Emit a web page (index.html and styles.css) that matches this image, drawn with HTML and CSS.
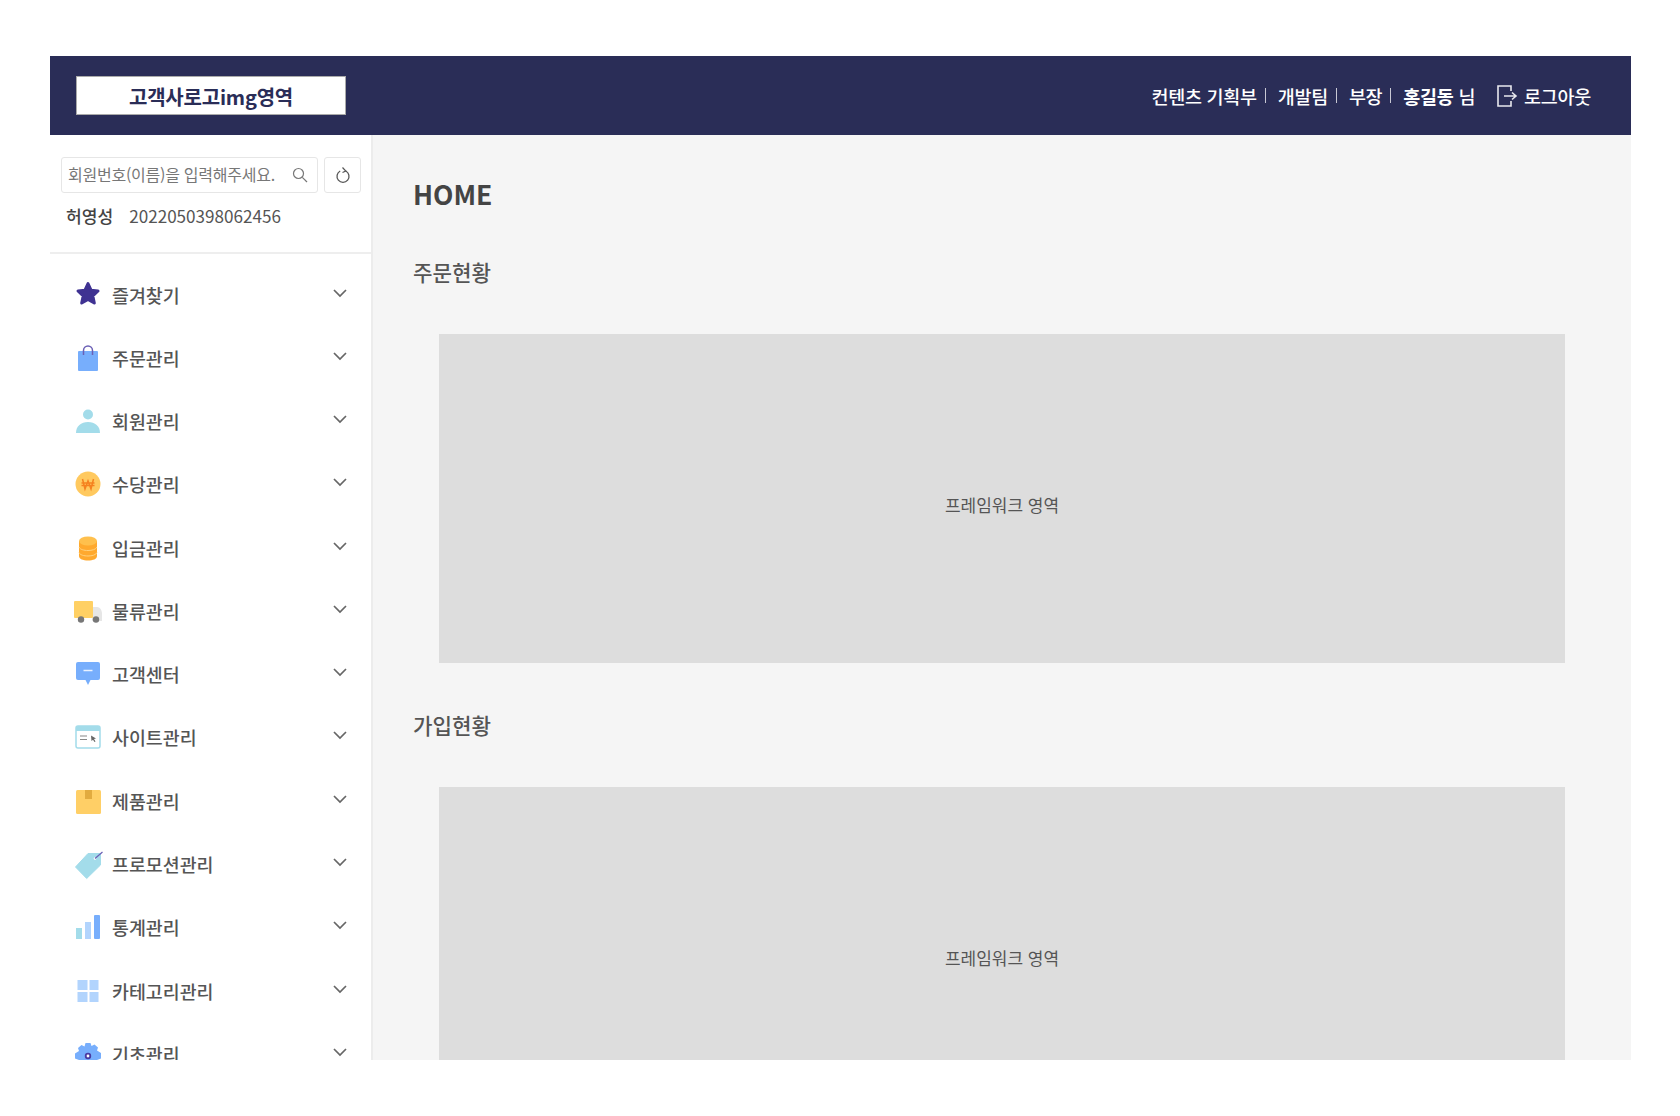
FILE: index.html
```html
<!DOCTYPE html>
<html lang="ko">
<head>
<meta charset="utf-8">
<title>HOME</title>
<link rel="stylesheet" href="styles.css">
</head>
<body>
<div class="app">
  <header class="topbar">
    <div class="logo">고객사로고img영역</div>
    <div class="user">
      <span>컨텐츠 기획부</span><i class="sep"></i>
      <span>개발팀</span><i class="sep"></i>
      <span>부장</span><i class="sep"></i>
      <span><b>홍길동</b> 님</span>
      <a class="logout">
        <svg width="22" height="24" viewBox="0 0 22 24" fill="none" stroke="#e8e8ee" stroke-width="1.6"><path d="M15 7V2H2v20h13v-5"/><path d="M8 12h12M16 8.500l4 3.500-4 3.500"/></svg>
        로그아웃
      </a>
    </div>
  </header>
  <div class="body">
    <aside class="side">
      <div class="member">
        <div class="search-row">
          <div class="search">
            <span class="ph">회원번호(이름)을 입력해주세요.</span>
            <svg width="16" height="16" viewBox="0 0 16 16" fill="none" stroke="#777" stroke-width="1.200"><circle cx="6.500" cy="6.500" r="5"/><path d="M10.300 10.300l4.700 4.700"/></svg>
          </div>
          <div class="refresh">
            <svg width="16" height="18" viewBox="0 0 16 18" fill="none" stroke="#555" stroke-width="1.300"><path d="M5.200 5a6 6 0 1 0 5.600 0"/><path d="M7.500 1.500l3.300 3.500-3.300 1.500" stroke-width="1.200"/></svg>
          </div>
        </div>
        <div class="who"><b>허영성</b><span>2022050398062456</span></div>
      </div>
      <ul class="menu">
        <li><svg viewBox="0 0 26 26"><path fill="#3f3292" stroke="#3f3292" stroke-width="3" stroke-linejoin="round" d="M13 1.500l3 6.700 7 .8-5.200 4.800 1.500 7.200L13 17.500l-6.300 3.500 1.500-7.200L3 9l7-.8z"/></svg><span>즐겨찾기</span><svg class="chev" viewBox="0 0 14 9"><path d="M1 1l6 6 6-6"/></svg></li>
        <li><svg viewBox="0 0 26 26"><rect x="3" y="6" width="20" height="20" rx="1" fill="#77aefc"/><path d="M8.500 9V4.500a4.500 4.500 0 0 1 9 0V9" transform="translate(0 1)" fill="none" stroke="#6a5fb5" stroke-width="1.500"/></svg><span>주문관리</span><svg class="chev" viewBox="0 0 14 9"><path d="M1 1l6 6 6-6"/></svg></li>
        <li><svg viewBox="0 0 26 26"><circle cx="13" cy="6.500" r="5" fill="#a3dcea"/><path fill="#a3dcea" d="M1 25c0-7 5-11 12-11s12 4 12 11z"/></svg><span>회원관리</span><svg class="chev" viewBox="0 0 14 9"><path d="M1 1l6 6 6-6"/></svg></li>
        <li><svg viewBox="0 0 26 26"><circle cx="13" cy="13" r="12.500" fill="#ffc95f"/><path d="M7.500 8l2.500 10 3-8 3 8 2.500-10M6.500 12h13M6.500 14.500h13" fill="none" stroke="#f5811f" stroke-width="1.500"/></svg><span>수당관리</span><svg class="chev" viewBox="0 0 14 9"><path d="M1 1l6 6 6-6"/></svg></li>
        <li><svg viewBox="0 0 26 26"><path fill="#ffa92e" d="M4 6h18v15c0 3-4 4.500-9 4.500S4 24 4 21z"/><ellipse cx="13" cy="6" rx="9" ry="4.500" fill="#ffc04d"/><path d="M4 12c1 2.500 5 3.500 9 3.500s8-1 9-3.500M4 17.500c1 2.500 5 3.500 9 3.500s8-1 9-3.500" fill="none" stroke="#ffd27e" stroke-width="1"/></svg><span>입금관리</span><svg class="chev" viewBox="0 0 14 9"><path d="M1 1l6 6 6-6"/></svg></li>
        <li><svg viewBox="0 0 26 26"><path fill="#e6e6e6" d="M17 9h5c3 0 5 3 5 7v7H17z"/><rect x="-1" y="3" width="19" height="17" rx="1" fill="#ffd064"/><circle cx="6" cy="21.500" r="3.200" fill="#777"/><circle cx="21" cy="21.500" r="3.200" fill="#777"/></svg><span>물류관리</span><svg class="chev" viewBox="0 0 14 9"><path d="M1 1l6 6 6-6"/></svg></li>
        <li><svg viewBox="0 0 26 26"><rect x="1" y="1" width="24" height="18" rx="2" fill="#77aefc"/><path d="M10 18h6l-3 6z" fill="#77aefc"/><path d="M8.500 9.500h9" stroke="#eaf2ff" stroke-width="1.500"/></svg><span>고객센터</span><svg class="chev" viewBox="0 0 14 9"><path d="M1 1l6 6 6-6"/></svg></li>
        <li><svg viewBox="0 0 26 26"><rect x="1" y="2" width="24" height="22" rx="2" fill="#fff" stroke="#a3dcea" stroke-width="1.500"/><path d="M1 7V4a2 2 0 0 1 2-2h20a2 2 0 0 1 2 2v3z" fill="#a3dcea"/><path d="M5 12h7M5 15.500h7" stroke="#888" stroke-width="1.200"/><path d="M16 11.500l5 3-2 .6 1.500 2.500-1 .5-1.500-2.400-1.500 1.300z" fill="#666"/></svg><span>사이트관리</span><svg class="chev" viewBox="0 0 14 9"><path d="M1 1l6 6 6-6"/></svg></li>
        <li><svg viewBox="0 0 26 26"><rect x="1" y="2" width="25" height="24" rx="1.500" fill="#ffcf66"/><rect x="10" y="2" width="7" height="9" fill="#e2ab3f"/></svg><span>제품관리</span><svg class="chev" viewBox="0 0 14 9"><path d="M1 1l6 6 6-6"/></svg></li>
        <li><svg viewBox="0 0 26 26"><path fill="#a3dcea" stroke="#a3dcea" stroke-linejoin="round" d="M.5 16L13 2.500h12.500v11.500L11.700 27.500z"/><circle cx="20" cy="7.500" r="1.300" fill="#fff"/><path d="M20 7.500L27.500 1" stroke="#6a5fb5" stroke-width="1.200"/></svg><span>프로모션관리</span><svg class="chev" viewBox="0 0 14 9"><path d="M1 1l6 6 6-6"/></svg></li>
        <li><svg viewBox="0 0 26 26"><rect x="1" y="14" width="6" height="11" fill="#a3dcea"/><rect x="10" y="8" width="6" height="17" fill="#b2d4fd"/><rect x="19" y="1" width="6" height="24" rx="1" fill="#77aefc"/></svg><span>통계관리</span><svg class="chev" viewBox="0 0 14 9"><path d="M1 1l6 6 6-6"/></svg></li>
        <li><svg viewBox="0 0 26 26"><g fill="#b2d4fd"><rect x="2.500" y="2" width="10" height="10"/><rect x="14.500" y="2" width="9" height="10"/><rect x="2.500" y="14" width="10" height="10"/><rect x="14.500" y="14" width="9" height="10"/></g></svg><span>카테고리관리</span><svg class="chev" viewBox="0 0 14 9"><path d="M1 1l6 6 6-6"/></svg></li>
        <li><svg viewBox="0 0 26 26"><path fill="#77aefc" d="M10.500 2h5l1 3 3-1.500 3.500 3-1 3 4 2.500v5.500l-4 1.500v2H4v-2l-4-1.500V12.500l4-2.500-1-3 3.500-3 3 1.500z"/><circle cx="13" cy="15" r="2.300" fill="#fff" stroke="#4a3aa0" stroke-width="1.800"/></svg><span>기초관리</span><svg class="chev" viewBox="0 0 14 9"><path d="M1 1l6 6 6-6"/></svg></li>
      </ul>
    </aside>
    <main class="main">
      <h1>HOME</h1>
      <h2>주문현황</h2>
      <div class="frame">프레임워크 영역</div>
      <h2>가입현황</h2>
      <div class="frame">프레임워크 영역</div>
    </main>
  </div>
</div>
</body>
</html>
```
FILE: styles.css
```css
* { box-sizing: border-box; }
html, body { height: 100%; }
body {
  margin: 0;
  padding: 56px 50px;
  background: #fff;
  font-family: "Noto Sans CJK KR", "Noto Sans", sans-serif;
  color: #444;
  overflow: hidden;
}
.app { width: 1581px; height: 1004px; display: flex; flex-direction: column; overflow: hidden; }
.topbar {
  height: 79px;
  flex: none;
  background: #2a2d57;
  display: flex;
  align-items: center;
  justify-content: space-between;
  padding: 0 40px 0 26px;
}
.logo {
  width: 270px;
  height: 39px;
  background: #fff;
  border: 1px solid #aaa;
  color: #2a2d57;
  font-size: 20px;
  font-weight: 700;
  padding-top: 1px;
  display: flex;
  align-items: center;
  justify-content: center;
  letter-spacing: -0.2px;
}
.user { display: flex; align-items: center; color: #fff; font-size: 18.500px; font-weight: 500; letter-spacing: -0.3px; }
.user b { font-weight: 700; }
.sep { width: 1px; height: 15px; background: #c8c8d4; margin: 0 12px 0 8px; }
.logout { display: flex; align-items: center; gap: 6px; margin-left: 21px; }
.body { flex: 1; display: flex; min-height: 0; }
.side {
  width: 323px;
  flex: none;
  background: #fff;
  border-right: 2px solid #ececec;
  overflow: hidden;
}
.member { height: 119px; padding: 22px 10px 0 11px; border-bottom: 2px solid #eee; }
.search-row { display: flex; gap: 6px; }
.search {
  width: 257px;
  height: 36px;
  border: 1px solid #e6e6e6;
  border-radius: 3px;
  display: flex;
  align-items: center;
  justify-content: space-between;
  padding: 0 9px 0 6px;
}
.ph { font-size: 16px; line-height: 32px; margin-top: -2px; color: #777; letter-spacing: -0.25px; white-space: nowrap; }
.refresh {
  width: 37px;
  height: 36px;
  border: 1px solid #e6e6e6;
  border-radius: 3px;
  display: flex;
  align-items: center;
  justify-content: center;
}
.who { display: flex; gap: 16px; margin: 8px 0 0 5px; font-size: 17.100px; line-height: 30px; color: #555; }
.who b { font-weight: 500; color: #444; }
.menu { list-style: none; margin: 0; padding: 9px 24px 0 25px; }
.menu li { height: 63.280px; display: flex; align-items: center; font-size: 18.400px; font-weight: 500; color: #555; }
.menu li > svg:first-child { width: 26px; height: 26px; flex: none; margin-right: 11px; overflow: visible; }
.menu li span { flex: 1; }
.chev { width: 14px; height: 9px; margin-top: -3px; fill: none; stroke: #666; stroke-width: 1.700; }
.main { flex: 1; background: #f5f5f5; padding: 41px 66px 0 40px; overflow: hidden; min-width: 0; }
h1 { margin: 0; font-size: 26.500px; line-height: 36px; font-weight: 700; color: #444; }
h2 { margin: 45px 0 0; font-size: 21.200px; line-height: 30px; font-weight: 500; color: #555; }
.frame {
  margin: 47px 0 0 26px;
  height: 329px;
  background: #ddd;
  display: flex;
  align-items: center;
  justify-content: center;
  padding-top: 11px;
  font-size: 17px;
  color: #555;
}
.frame + h2 { margin-top: 47px; }
```
